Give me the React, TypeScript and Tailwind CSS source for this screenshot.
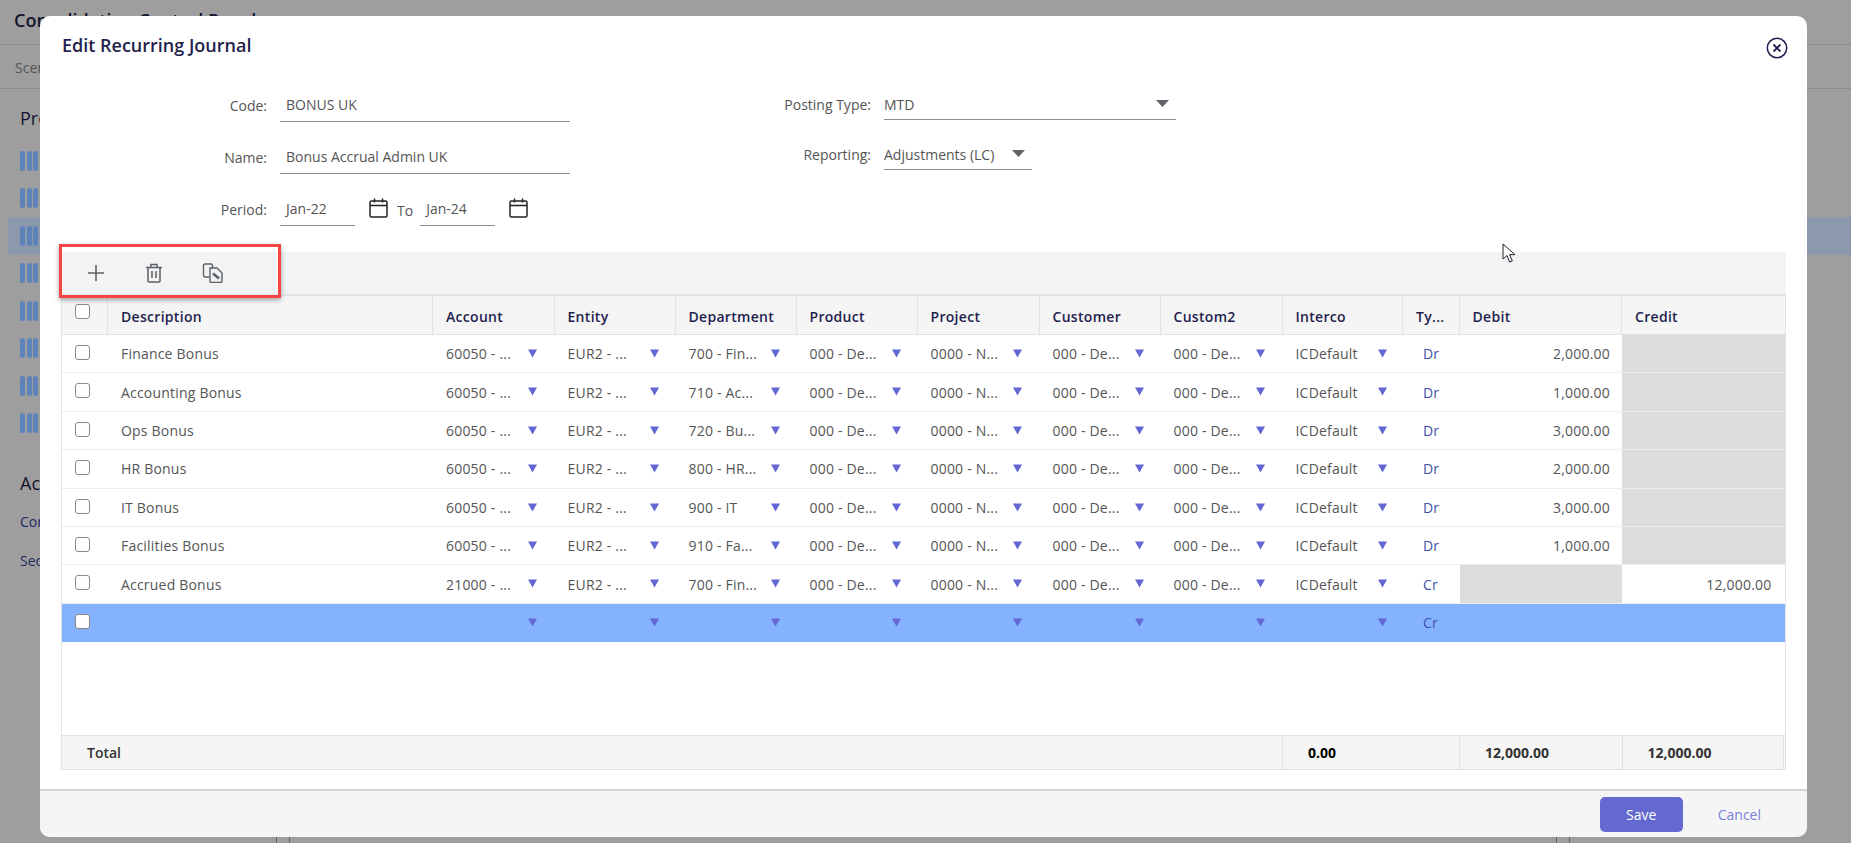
const font = "font-['Open_Sans','Noto_Sans',sans-serif]"

const rows = [
  { d: "Finance Bonus", a: "60050 - ...", dep: "700 - Fin...", t: "Dr", debit: "2,000.00", credit: "" },
  { d: "Accounting Bonus", a: "60050 - ...", dep: "710 - Ac...", t: "Dr", debit: "1,000.00", credit: "" },
  { d: "Ops Bonus", a: "60050 - ...", dep: "720 - Bu...", t: "Dr", debit: "3,000.00", credit: "" },
  { d: "HR Bonus", a: "60050 - ...", dep: "800 - HR...", t: "Dr", debit: "2,000.00", credit: "" },
  { d: "IT Bonus", a: "60050 - ...", dep: "900 - IT", t: "Dr", debit: "3,000.00", credit: "" },
  { d: "Facilities Bonus", a: "60050 - ...", dep: "910 - Fa...", t: "Dr", debit: "1,000.00", credit: "" },
  { d: "Accrued Bonus", a: "21000 - ...", dep: "700 - Fin...", t: "Cr", debit: "", credit: "12,000.00" },
]

const cols = "grid grid-cols-[46px_325px_121.5px_121px_121px_121px_122px_121px_122px_120.5px_56.5px_162.5px_162.5px]"
const headers = ["Description", "Account", "Entity", "Department", "Product", "Project", "Customer", "Custom2", "Interco", "Ty...", "Debit", "Credit"]

function Caret() {
  return (
    <svg width="9" height="9" viewBox="0 0 9 9" className="absolute left-[95px] top-[14px]">
      <path d="M0 0.5h9L4.5 8.5z" fill="#6367d3" />
    </svg>
  )
}

function Checkbox() {
  return <span className="block w-[15px] h-[15px] rounded-[3px] border-[1.5px] border-[#8a8a8a] bg-white" />
}

function DropCell({ text }: { text?: string }) {
  return (
    <div className="relative pl-[13px] flex items-center">
      <span className="whitespace-nowrap">{text}</span>
      <Caret />
    </div>
  )
}

function Calendar() {
  return (
    <svg width="19" height="20" viewBox="0 0 19 20" fill="none" stroke="#222" strokeWidth="1.5">
      <rect x="1" y="3" width="17" height="16" rx="1.5" />
      <path d="M1 7.5h17M5.5 0.5v4M13.5 0.5v4" />
    </svg>
  )
}

function SelectCaret() {
  return (
    <svg width="13" height="7" viewBox="0 0 13 7">
      <path d="M0 0h13L6.5 7z" fill="#5f6368" />
    </svg>
  )
}

function Field({ label, value, className }: { label: string; value: string; className: string }) {
  return (
    <div className="flex items-start">
      <span className="w-[240px] text-right pr-[13px] pt-[1px] text-[#555]">{label}</span>
      <div className={"h-[28px] border-b border-[#8c8c8c] pl-[6px] text-[#555] " + className}>{value}</div>
    </div>
  )
}

function Bars() {
  return (
    <span className="flex gap-[1.5px]">
      <span className="w-[5px] h-5 rounded-full bg-[#5d83b8]" />
      <span className="w-[5px] h-5 rounded-full bg-[#5d83b8]" />
      <span className="w-[5px] h-5 rounded-full bg-[#5d83b8]" />
    </span>
  )
}

export default function App() {
  return (
    <div className={"relative w-screen h-screen overflow-hidden bg-[#9e9e9e] text-[14px] " + font}>
      {/* page behind the dialog */}
      <div className="h-[45px] border-b border-[#8b8b8b] pl-[14px] pt-[7px] text-[18px] font-semibold text-[#14142e]">Consolidation Control Panel</div>
      <div className="h-[44px] border-b border-[#8b8b8b] pl-[15px] pt-[12px] text-[#555]">Scenario</div>
      <div className="pl-5 pt-4 text-[18px] font-medium text-[#14142e]">Process</div>
      <div className="relative mt-[10px]">
        {[0, 1, 2, 3, 4, 5, 6, 7].map((i) => (
          <div key={i} className={"h-[37.5px] ml-2 pl-3 flex items-center rounded-l " + (i === 2 ? "bg-[#8c99ad]" : "")}>
            <Bars />
          </div>
        ))}
      </div>
      <div className="pl-5 pt-[28px] text-[18px] font-medium text-[#14142e]">Actions</div>
      <div className="pl-5 pt-[14px] text-[#1d2b63]">Consolidate</div>
      <div className="pl-5 pt-[18px] text-[#1d2b63]">Security</div>
      <div className="absolute left-[276px] top-[837px] w-[14px] h-[6px] border-x border-[#666]" />
      <div className="absolute left-[1556px] top-[837px] w-[14px] h-[6px] border-x border-[#666]" />

      {/* dialog */}
      <div className="absolute left-[40px] top-[16px] w-[1767px] h-[821px] bg-white rounded-[10px] flex flex-col overflow-hidden">
        <div className="h-[236px] shrink-0 relative">
          <h2 className="pl-[22px] pt-[16px] text-[18px] font-semibold text-[#1f1f4d]">Edit Recurring Journal</h2>
          <svg width="22" height="22" viewBox="0 0 22 22" fill="none" stroke="#1f1f4d" className="absolute left-[1726px] top-[21px]">
            <circle cx="11" cy="11" r="9.7" strokeWidth="1.5" />
            <path d="M7.5 7.5l7 7M14.5 7.5l-7 7" strokeWidth="1.8" />
          </svg>
          <div className="flex mt-[35px]">
            <div className="flex flex-col gap-[24px] w-[603px]">
              <Field label="Code:" value="BONUS UK" className="w-[290px]" />
              <Field label="Name:" value="Bonus Accrual Admin UK" className="w-[290px]" />
              <div className="flex items-start">
                <span className="w-[240px] text-right pr-[13px] pt-[1px] text-[#555]">Period:</span>
                <div className="w-[75px] h-[28px] border-b border-[#8c8c8c] pl-[6px] text-[#555]">Jan-22</div>
                <span className="ml-[14px]"><Calendar /></span>
                <span className="ml-[9px] mr-[7px] pt-[2px] text-[#555]">To</span>
                <div className="w-[75px] h-[28px] border-b border-[#8c8c8c] pl-[6px] text-[#555]">Jan-24</div>
                <span className="ml-[14px]"><Calendar /></span>
              </div>
            </div>
            <div className="flex flex-col gap-[24px]">
              <div className="flex items-start">
                <span className="w-[241px] text-right pr-[13px] text-[#555]">Posting Type:</span>
                <div className="w-[292px] h-[26px] border-b border-[#8c8c8c] flex justify-between text-[#555]">
                  MTD
                  <span className="pr-[7px] pt-[6px]"><SelectCaret /></span>
                </div>
              </div>
              <div className="flex items-start">
                <span className="w-[241px] text-right pr-[13px] text-[#555]">Reporting:</span>
                <div className="w-[148px] h-[26px] border-b border-[#8c8c8c] flex justify-between text-[#555]">
                  Adjustments (LC)
                  <span className="pr-[7px] pt-[6px]"><SelectCaret /></span>
                </div>
              </div>
            </div>
          </div>
        </div>

        <div className="relative ml-[21px] w-[1725px] flex-1 min-h-0 flex flex-col">
          {/* toolbar */}
          <div className="h-[44px] shrink-0 bg-[#f3f3f3] border-b-2 border-[#e3e3e3] flex items-center">
            <svg width="18" height="18" viewBox="0 0 18 18" stroke="#5b6168" strokeWidth="1.6" className="ml-[26px]">
              <path d="M9 1v16M1 9h16" />
            </svg>
            <svg width="18" height="20" viewBox="0 0 18 20" fill="none" stroke="#5b6168" strokeWidth="1.5" className="ml-[40px]">
              <path d="M1 4.5h16M6 4V1.5h6V4M3 4.5V18a1 1 0 001 1h10a1 1 0 001-1V4.5M7 8v7M11 8v7" />
            </svg>
            <svg width="21" height="20" viewBox="0 0 21 20" fill="none" stroke="#5b6168" strokeWidth="1.4" className="ml-[39px]">
              <path d="M7 14H3a1.5 1.5 0 01-1.5-1.5V2.5A1.5 1.5 0 013 1h6a1.5 1.5 0 011.5 1.5V5" />
              <path d="M8 5h7l5 5v8a1.5 1.5 0 01-1.5 1.5h-9A1.5 1.5 0 018 18z" />
              <path d="M11 10.5l6 5" strokeWidth="2.6" />
            </svg>
          </div>
          {/* red highlight over the toolbar */}
          <div className="absolute left-[-2px] top-[-8px] w-[222px] h-[54px] border-[3px] border-[#f44646] shadow-[0_2px_5px_rgba(0,0,0,0.35)] pointer-events-none" />

          <div className="flex-1 flex flex-col border-x border-[#e2e2e2] min-h-0">
            {/* header */}
            <div className={cols + " h-[39px] shrink-0 bg-[#f5f5f5] border-b border-[#e2e2e2] font-semibold text-[#1f1f4d] tracking-[0.3px]"}>
              <div className="pl-[13px] pt-[8px] border-r border-[#e2e2e2]"><Checkbox /></div>
              {headers.map((h, i) => (
                <div key={h} className={"pl-[13px] flex items-center pt-[2px] " + (i < 11 ? "border-r border-[#e2e2e2]" : "")}>{h}</div>
              ))}
            </div>

            {/* rows */}
            <div className="flex-1 min-h-0 text-[#555] tracking-[0.2px]">
              {rows.map((r) => (
                <div key={r.d} className={cols + " h-[38.4px] border-b border-[#ececec]"}>
                  <div className="pl-[13px] pt-[10px]"><Checkbox /></div>
                  <div className="pl-[13px] flex items-center">{r.d}</div>
                  <DropCell text={r.a} />
                  <DropCell text="EUR2 - ..." />
                  <DropCell text={r.dep} />
                  <DropCell text="000 - De..." />
                  <DropCell text="0000 - N..." />
                  <DropCell text="000 - De..." />
                  <DropCell text="000 - De..." />
                  <DropCell text="ICDefault" />
                  <div className="pl-[20px] flex items-center text-[#3f51a8]">{r.t}</div>
                  <div className={"flex items-center justify-end pr-[12px] " + (r.debit ? "" : "bg-[#dcdcdc]")}>{r.debit}</div>
                  <div className={"flex items-center justify-end pr-[13px] " + (r.credit ? "" : "bg-[#dcdcdc]")}>{r.credit}</div>
                </div>
              ))}
              <div className={cols + " h-[38.4px] bg-[#85b2ff]"}>
                <div className="pl-[13px] pt-[10px]"><Checkbox /></div>
                <div />
                <DropCell />
                <DropCell />
                <DropCell />
                <DropCell />
                <DropCell />
                <DropCell />
                <DropCell />
                <DropCell />
                <div className="pl-[20px] flex items-center text-[#3f51a8]">Cr</div>
                <div />
                <div />
              </div>
            </div>

            {/* totals */}
            <div className="h-[35px] shrink-0 bg-[#f5f5f5] border-y border-[#e2e2e2] flex font-bold text-[#333] items-stretch">
              <div className="w-[1220px] pl-[25px] flex items-center font-semibold">Total</div>
              <div className="w-[177px] pl-[25px] flex items-center border-l border-[#e2e2e2] text-black">0.00</div>
              <div className="w-[162.5px] pl-[25px] flex items-center border-l border-[#e2e2e2]">12,000.00</div>
              <div className="w-[162.5px] pl-[25px] flex items-center border-x border-[#e2e2e2]">12,000.00</div>
            </div>
          </div>
        </div>

        {/* footer */}
        <div className="h-[48px] mt-[19px] shrink-0 bg-[#f5f5f5] border-t-2 border-[#d4d4d4] flex items-center justify-end">
          <button className="w-[83px] h-[35px] rounded-[5px] bg-[#6469d0] text-white">Save</button>
          <button className="ml-[35px] mr-[46px] text-[#7b7fdc]">Cancel</button>
        </div>
      </div>

      {/* mouse cursor */}
      <svg width="14" height="21" viewBox="0 0 14 21" className="absolute left-[1502px] top-[243px]">
        <path d="M1 1v15l4-3.5 2.7 6.5 2.6-1.1-2.7-6.2H13z" fill="#fff" stroke="#1f1f2e" strokeWidth="1" />
      </svg>
    </div>
  )
}
